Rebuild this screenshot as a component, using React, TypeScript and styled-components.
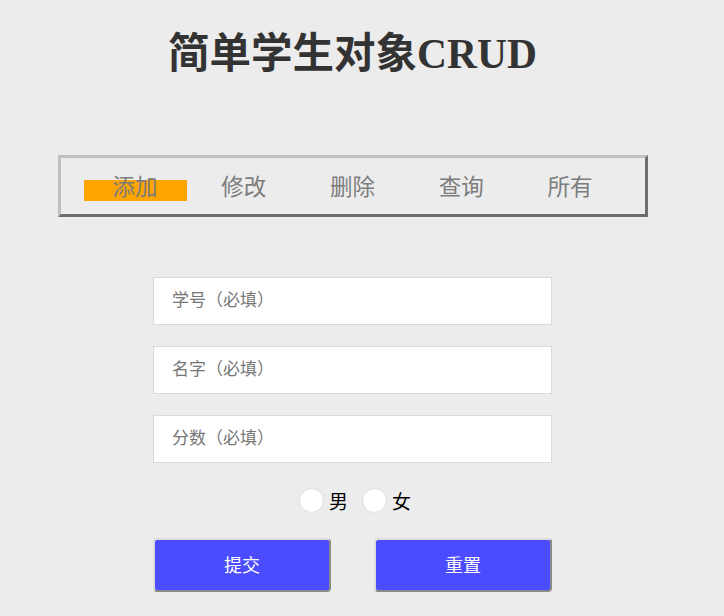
import React from "react";
import styled, { createGlobalStyle } from "styled-components";

const Global = createGlobalStyle`
  html, body { margin: 0; padding: 0; background: #ececec; }
  body { font-family: "Liberation Serif", "Noto Sans CJK SC", serif; }
  * { box-sizing: border-box; }
`;

const Page = styled.div`
  width: 705px;
  display: flex;
  flex-direction: column;
  align-items: center;
`;

const Title = styled.h1`
  margin: 30px 0 0;
  font-size: 41.5px;
  line-height: 48px;
  font-weight: bold;
  color: #333;
  font-family: "Liberation Serif", "Noto Sans CJK SC", serif;
`;

const TabBar = styled.ul`
  list-style: none;
  margin: 77px 0 0;
  width: 590px;
  height: 62px;
  padding: 22px 23px 0;
  display: flex;
  justify-content: space-between;
  align-items: flex-start;
  border: 3px solid;
  border-color: #c0c0c0 #6e6e6e #6e6e6e #c0c0c0;
`;

const Tab = styled.li<{ $active?: boolean }>`
  width: 103px;
  height: 21px;
  line-height: 10px;
  text-align: center;
  font-size: 22.5px;
  color: #7c7c7c;
  font-family: "Noto Sans CJK SC", sans-serif;
  background: ${(p) => (p.$active ? "#ffa500" : "transparent")};
  cursor: pointer;
`;

const Form = styled.form`
  margin-top: 60px;
  width: 399px;
  display: flex;
  flex-direction: column;
  align-items: center;
`;

const Field = styled.input`
  width: 399px;
  height: 48px;
  margin-bottom: 21px;
  border: 1px solid #dadada;
  background: #fff;
  padding: 0 0 5px 18px;
  font-size: 17px;
  font-family: "Noto Sans CJK SC", sans-serif;
  outline: none;
  &::placeholder { color: #767676; }
`;

const RadioRow = styled.div`
  margin-top: 3px;
  padding-left: 5px;
  display: flex;
  align-items: center;
`;

const RadioLabel = styled.label`
  display: flex;
  align-items: center;
  font-size: 19px;
  color: #000;
  font-family: "Noto Sans CJK SC", sans-serif;
  margin-right: 14px;
  &:last-child { margin-right: 0; }
`;

const Radio = styled.input.attrs({ type: "radio" })`
  appearance: none;
  -webkit-appearance: none;
  flex: none;
  width: 25px;
  height: 25px;
  margin: 0 5px 0 0;
  border-radius: 50%;
  border: 1px solid #dedede;
  background: #fff;
`;

const ButtonRow = styled.div`
  margin-top: 24px;
  width: 399px;
  display: flex;
  justify-content: space-between;
`;

const Button = styled.button`
  width: 178px;
  height: 54px;
  padding: 0 0 2px;
  border: 2px solid;
  border-color: #dcdcdc #8a8a8a #8a8a8a #dcdcdc;
  border-radius: 4px;
  background: #4b4bff;
  color: #fff;
  font-size: 18px;
  font-family: "Noto Sans CJK SC", sans-serif;
  cursor: pointer;
`;

export default function App() {
  return (
    <Page>
      <Global />
      <Title>简单学生对象CRUD</Title>
      <TabBar>
        <Tab $active>添加</Tab>
        <Tab>修改</Tab>
        <Tab>删除</Tab>
        <Tab>查询</Tab>
        <Tab>所有</Tab>
      </TabBar>
      <Form onSubmit={(e) => e.preventDefault()}>
        <Field placeholder="学号（必填）" />
        <Field placeholder="名字（必填）" />
        <Field placeholder="分数（必填）" />
        <RadioRow>
          <RadioLabel>
            <Radio name="sex" />男
          </RadioLabel>
          <RadioLabel>
            <Radio name="sex" />女
          </RadioLabel>
        </RadioRow>
        <ButtonRow>
          <Button type="submit">提交</Button>
          <Button type="reset">重置</Button>
        </ButtonRow>
      </Form>
    </Page>
  );
}
